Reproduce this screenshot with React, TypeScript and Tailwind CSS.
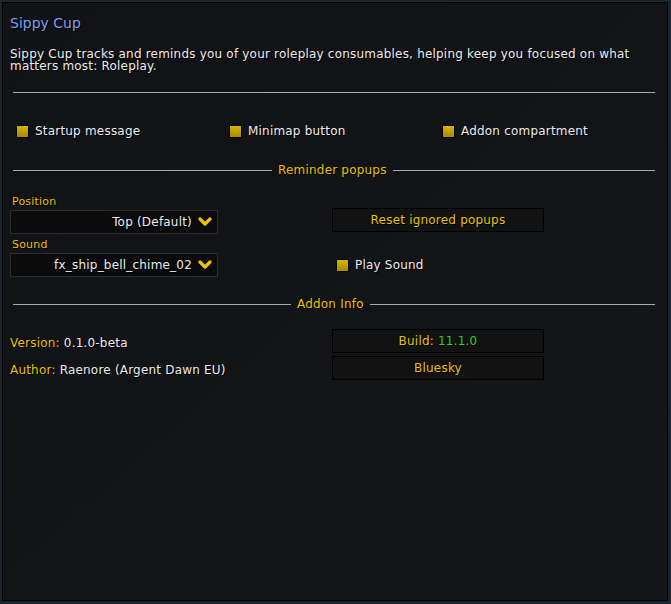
import React from 'react'

const shadow = '[text-shadow:1px_1px_0_#000]'

function Check({ label, className = '' }: { label: string; className?: string }) {
  return (
    <div className={`flex items-center gap-[6px] ${className}`}>
      <span className="w-[13px] h-[13px] border border-black bg-gradient-to-b from-[#d9b400] to-[#a88a00] shrink-0" />
      <span className={`text-[12px] leading-[14px] text-[#ececec] ${shadow}`}>{label}</span>
    </div>
  )
}

function Heading({ title, left, right }: { title: string; left: string; right: string }) {
  return (
    <div className="flex items-center h-[14px]">
      <div className={`h-px bg-[#a9a9a9] ${left}`} />
      <span className={`px-[6px] text-[12px] text-[#e8c100] ${shadow}`}>{title}</span>
      <div className={`h-px bg-[#a9a9a9] ${right}`} />
    </div>
  )
}

function Dropdown({ value }: { value: string }) {
  return (
    <div className="w-[208px] h-[24px] bg-[#0b0b0c] border border-[#2c2c2c] flex items-center justify-end pr-[5px] gap-[6px]">
      <span className={`text-[12px] text-[#ececec] ${shadow}`}>{value}</span>
      <svg width="14" height="10" viewBox="0 0 14 10">
        <polyline points="2,2 7,7 12,2" fill="none" stroke="#f0c400" strokeWidth="3.2" strokeLinecap="round" strokeLinejoin="round" />
      </svg>
    </div>
  )
}

function Button({ children }: { children: React.ReactNode }) {
  return (
    <div className={`w-[212px] h-[24px] bg-[#121213] border border-black flex items-center justify-center text-[12px] text-[#e8c100] ${shadow}`}>
      {children}
    </div>
  )
}

export default function App() {
  return (
    <div className="w-[671px] h-[604px] bg-[#1b2431] pl-[2px] pt-[2px] pr-[3px] pb-[3px] font-['DejaVu_Sans',sans-serif] tracking-[0.2px]">
      <div className="h-full border border-black bg-gradient-to-br from-[#111215] to-[#151618] pl-[7px] pr-[12px]">
        <h1 className={`mt-[11px] text-[14px] leading-[18px] text-[#7b9ef2] tracking-normal ${shadow}`}>Sippy Cup</h1>

        <p className={`mt-[16px] text-[12px] leading-[12px] text-[#ececec] ${shadow}`}>
          Sippy Cup tracks and reminds you of your roleplay consumables, helping keep you focused on what matters most: Roleplay.
        </p>

        <div className="mt-[20px] ml-[3px] h-px bg-[#a9a9a9]" />

        <div className="mt-[31px] grid grid-cols-[213px_213px_1fr] pl-[6px]">
          <Check label="Startup message" />
          <Check label="Minimap button" />
          <Check label="Addon compartment" />
        </div>

        <div className="mt-[25px] ml-[3px]">
          <Heading title="Reminder popups" left="w-[259px]" right="flex-1" />
        </div>

        <div className="mt-[17px] flex">
          <div className="w-[322px]">
            <div className={`pl-[2px] text-[11px] leading-[16px] text-[#e8c100] ${shadow}`}>Position</div>
            <Dropdown value="Top (Default)" />
          </div>
          <div className="pt-[14px]">
            <Button>Reset ignored popups</Button>
          </div>
        </div>

        <div className="mt-[3px] flex">
          <div className="w-[326px]">
            <div className={`pl-[2px] text-[11px] leading-[16px] text-[#e8c100] ${shadow}`}>Sound</div>
            <Dropdown value="fx_ship_bell_chime_02" />
          </div>
          <div className="pt-[21px]">
            <Check label="Play Sound" />
          </div>
        </div>

        <div className="mt-[20px] ml-[3px]">
          <Heading title="Addon Info" left="w-[278px]" right="flex-1" />
        </div>

        <div className="mt-[18px] flex items-start">
          <div className={`w-[322px] flex flex-col gap-[13px] pt-[7px] text-[12px] leading-[14px] ${shadow}`}>
            <div>
              <span className="text-[#e8c100]">Version: </span>
              <span className="text-[#ececec]">0.1.0-beta</span>
            </div>
            <div>
              <span className="text-[#e8c100]">Author: </span>
              <span className="text-[#ececec]">Raenore (Argent Dawn EU)</span>
            </div>
          </div>
          <div className="flex flex-col gap-[3px]">
            <Button>
              Build:&nbsp;<span className="text-[#22d822]">11.1.0</span>
            </Button>
            <Button>Bluesky</Button>
          </div>
        </div>
      </div>
    </div>
  )
}
